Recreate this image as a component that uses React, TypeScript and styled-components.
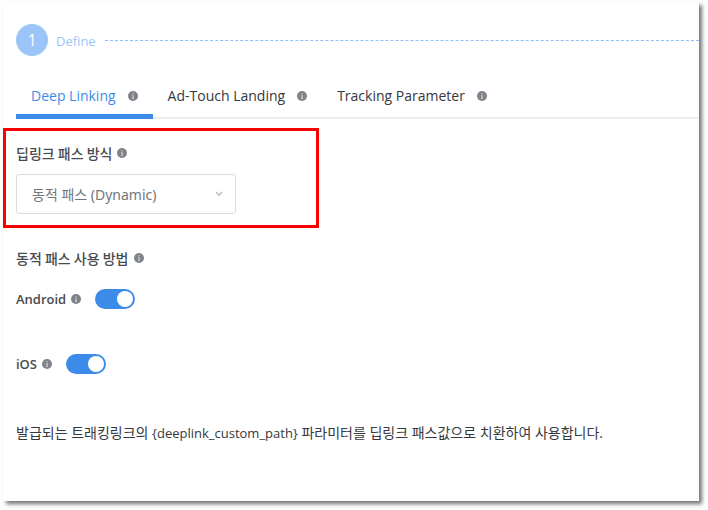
import React, { useState } from "react";
import styled, { createGlobalStyle } from "styled-components";

const GlobalStyle = createGlobalStyle`
  *, *::before, *::after { box-sizing: border-box; }
  body {
    margin: 0;
    background: #ffffff;
    color: #35383d;
    font-family: "Open Sans", "Noto Sans CJK KR", sans-serif;
    font-size: 13px;
  }
  button, select, input { font: inherit; margin: 0; }
`;

const Card = styled.main`
  margin: 2px 9px 9px 3px;
  min-height: calc(100vh - 11px);
  background: #ffffff;
  box-shadow: 3px 3px 4px rgba(0, 0, 0, 0.55);
`;

const StepHeader = styled.header`
  display: flex;
  align-items: center;
  padding: 22px 0 0 13px;
`;

const StepNumber = styled.span`
  display: flex;
  align-items: center;
  justify-content: center;
  width: 32px;
  height: 32px;
  border-radius: 50%;
  background: #9bc5f8;
  color: #ffffff;
  font-size: 16px;
`;

const StepName = styled.span`
  margin: 2px 9px 0 8px;
  color: #9bc5f8;
  font-size: 13px;
  line-height: 20px;
`;

const StepLine = styled.span`
  flex: 1;
  border-top: 1px dashed #8fbffa;
`;

const Tabs = styled.div`
  display: flex;
  margin: 18px 0 0 13px;
  border-bottom: 2px solid #e9eeed;
`;

const Tab = styled.button<{ $active: boolean }>`
  display: flex;
  align-items: center;
  gap: 12px;
  height: 45px;
  margin-bottom: -2px;
  padding: 4px 15px 0;
  border: 0;
  border-bottom: 5px solid ${(p) => (p.$active ? "#3d8be9" : "transparent")};
  background: none;
  color: ${(p) => (p.$active ? "#3d8be9" : "#35383d")};
  font-size: 14px;
  line-height: 20px;
  white-space: nowrap;
  cursor: pointer;
`;

const Highlight = styled.section`
  display: flex;
  flex-direction: column;
  align-items: flex-start;
  gap: 11px;
  max-width: 316px;
  margin-top: 9px;
  padding: 12px 10px 11px;
  border: 3px solid #fb0000;
`;

const Label = styled.label`
  display: flex;
  align-items: center;
  gap: 5px;
  color: #484b50;
  font-size: 13px;
  font-weight: 600;
  line-height: 20px;
`;

const FieldLabel = styled(Label)`
  font-family: "Noto Sans CJK KR", sans-serif;
  font-size: 14px;
  font-weight: 500;
`;

const Heading = styled(FieldLabel).attrs({ as: "h2" })`
  margin: 0;
`;

const SelectBox = styled.div`
  display: grid;
  align-items: center;
  width: 220px;
  max-width: 100%;

  & > * { grid-area: 1 / 1; }
  & > svg { justify-self: end; margin-right: 13px; pointer-events: none; }
`;

const Select = styled.select`
  appearance: none;
  width: 100%;
  height: 40px;
  padding: 0 32px 0 15px;
  border: 1px solid #d8dae4;
  border-radius: 3px;
  background: #ffffff;
  color: #72767b;
  font-family: "Noto Sans", "Noto Sans CJK KR", sans-serif;
  font-size: 14px;
`;

const Settings = styled.section`
  display: flex;
  flex-direction: column;
  padding: 20px 13px 0;
`;

const SwitchRow = styled.div`
  display: flex;
  align-items: center;
  gap: 14px;
  height: 20px;
  margin: 21px 0 24px;
`;

const Switch = styled.input`
  appearance: none;
  display: flex;
  justify-content: flex-start;
  width: 40px;
  height: 20px;
  padding: 2px;
  border-radius: 10px;
  background: #c3c8d0;
  cursor: pointer;

  &::before {
    content: "";
    width: 16px;
    height: 16px;
    border-radius: 50%;
    background: #ffffff;
  }
  &:checked { justify-content: flex-end; background: #3d8be9; }
`;

const Note = styled.p`
  margin: 25px 0 0;
  font-size: 14px;
  line-height: 20px;
`;

const Placeholder = styled.span`
  font-size: 13px;
`;

const InfoIcon = () => (
  <svg width="10" height="10" viewBox="0 0 10 10" aria-hidden="true">
    <circle cx="5" cy="5" r="5" fill="#7f8389" />
    <path d="M4.4 2.2h1.2v1.1H4.4zM4.1 4.2h1.5v2.8h.4v.7H4v-.7h.5V4.9h-.4z" fill="#d8dadd" />
  </svg>
);

const Chevron = () => (
  <svg width="8" height="6" viewBox="0 0 8 6" fill="none" stroke="#b4b8c0" strokeWidth="1.3" aria-hidden="true">
    <path d="M1 1l3 3.2L7 1" />
  </svg>
);

const tabs = ["Deep Linking", "Ad-Touch Landing", "Tracking Parameter"];
const platforms = ["Android", "iOS"];

export default function App() {
  const [active, setActive] = useState(tabs[0]);
  return (
    <>
      <GlobalStyle />
      <Card>
        <StepHeader>
          <StepNumber>1</StepNumber>
          <StepName>Define</StepName>
          <StepLine />
        </StepHeader>
        <Tabs role="tablist">
          {tabs.map((tab) => (
            <Tab
              key={tab}
              type="button"
              role="tab"
              aria-selected={tab === active}
              $active={tab === active}
              onClick={() => setActive(tab)}
            >
              {tab}
              <InfoIcon />
            </Tab>
          ))}
        </Tabs>
        <Highlight>
          <FieldLabel htmlFor="path-type">
            딥링크 패스 방식
            <InfoIcon />
          </FieldLabel>
          <SelectBox>
            <Select id="path-type" defaultValue="dynamic">
              <option value="dynamic">동적 패스 (Dynamic)</option>
            </Select>
            <Chevron />
          </SelectBox>
        </Highlight>
        <Settings>
          <Heading>
            동적 패스 사용 방법
            <InfoIcon />
          </Heading>
          {platforms.map((name) => (
            <SwitchRow key={name}>
              <Label htmlFor={name}>
                {name}
                <InfoIcon />
              </Label>
              <Switch id={name} type="checkbox" role="switch" defaultChecked />
            </SwitchRow>
          ))}
          <Note>
            발급되는 트래킹링크의 <Placeholder>{"{deeplink_custom_path}"}</Placeholder> 파라미터를 딥링크 패스값으로 치환하여 사용합니다.
          </Note>
        </Settings>
      </Card>
    </>
  );
}
